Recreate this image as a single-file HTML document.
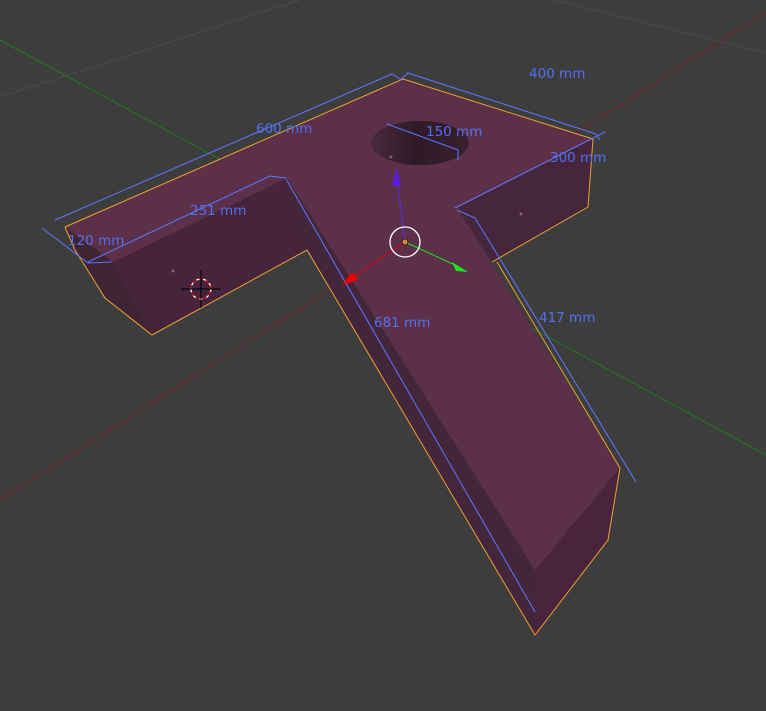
<!DOCTYPE html>
<html><head><style>
html,body{margin:0;padding:0;background:#3d3d3d;width:766px;height:711px;overflow:hidden}
svg{display:block}
text{font-family:"DejaVu Sans","Liberation Sans",sans-serif;font-size:13.5px;fill:#5070f0}
</style></head><body>
<svg width="766" height="711" viewBox="0 0 766 711">
<defs>
<linearGradient id="h" x1="0" x2="1" y1="0" y2="0">
<stop offset="0" stop-color="#4a2a3d"/><stop offset=".45" stop-color="#2e1a26"/><stop offset="1" stop-color="#3a2030"/>
</linearGradient>
</defs>
<rect width="766" height="711" fill="#3d3d3d"/>
<line x1="0" y1="97" x2="300" y2="0" stroke="#4a4a4a"/>
<line x1="555" y1="0" x2="766" y2="53" stroke="#4a4a4a"/>
<line x1="0" y1="500" x2="766" y2="12" stroke="#7a1d24" stroke-width="1"/>
<line x1="0" y1="40" x2="766" y2="455" stroke="#1f7a1f" stroke-width="1"/>
<polygon points="65,227 113,262 152,335 105,298 75,250" fill="#3f2433"/>
<polygon points="113,262 287,178 307,250 152,335" fill="#46243c"/>
<polygon points="287,178 535,570 535,635 307,250" fill="#43263a"/>
<polygon points="535,570 620,468 608,540 535,635" fill="#48243d"/>
<polygon points="457,208 593,139 588,207 492,262" fill="#45263c"/>
<polygon points="65,227 403,79 593,139 457,208 620,468 535,570 287,178 113,262" fill="#5c3049"/>
<ellipse cx="420" cy="143" rx="49" ry="22" fill="url(#h)"/>
<polyline points="65,227 75,250 105,298 152,335 307,250 535,635 608,540 620,468 497,262" fill="none" stroke="#f0a030" stroke-width="1"/>
<polyline points="65,227 403,79 593,139 588,207 492,262" fill="none" stroke="#f0a030" stroke-width="1"/>
<g fill="none" stroke="#5a78ff" stroke-width="1">
<polyline points="42,228 88,263 112,262"/>
<polyline points="55,220 392,74 400,79"/>
<polyline points="400,80 408,73 596,134 600,140"/>
<polyline points="88,262 270,176 286,178"/>
<polyline points="286,179 535,612"/>
<polyline points="455,208 605,132"/>
<polyline points="457,210 475,218 636,482"/>
<polyline points="387,124 458,150 458,160"/>
</g>
<circle cx="391" cy="157" r="1.5" fill="#8a6070"/>
<circle cx="173" cy="271" r="1.5" fill="#8a6070"/>
<circle cx="521" cy="214" r="1.5" fill="#8a6070"/>
<line x1="405" y1="242" x2="397" y2="180" stroke="#5a2de0" stroke-width="1"/>
<polygon points="396,168 392,186 401,185" fill="#5a1ee0"/>
<line x1="405" y1="242" x2="352" y2="278" stroke="#e00000" stroke-width="1"/>
<polygon points="342,285 352,272 358,280" fill="#f00000"/>
<line x1="405" y1="242" x2="455" y2="265" stroke="#20e020" stroke-width="1"/>
<polygon points="468,272 452,262 456,271" fill="#20e020"/>
<circle cx="405" cy="242" r="15" fill="none" stroke="#fff" stroke-width="1.3"/>
<circle cx="405" cy="242" r="3" fill="#d08a3c" stroke="#000" stroke-width=".6"/>
<circle cx="201" cy="289" r="10" fill="none" stroke="#fff" stroke-dasharray="4 3" stroke-width="1.3"/>
<circle cx="201" cy="289" r="10" fill="none" stroke="#d00" stroke-dasharray="3 4" stroke-dashoffset="4" stroke-width="1.3"/>
<line x1="181" y1="289" x2="221" y2="289" stroke="#000"/>
<line x1="201" y1="270" x2="201" y2="308" stroke="#000"/>
<text x="529" y="78">400 mm</text>
<text x="256" y="133">600 mm</text>
<text x="426" y="136">150 mm</text>
<text x="550" y="162">300 mm</text>
<text x="190" y="215">251 mm</text>
<text x="68" y="245">120 mm</text>
<text x="374" y="327">681 mm</text>
<text x="539" y="322">417 mm</text>
</svg>
</body></html>
